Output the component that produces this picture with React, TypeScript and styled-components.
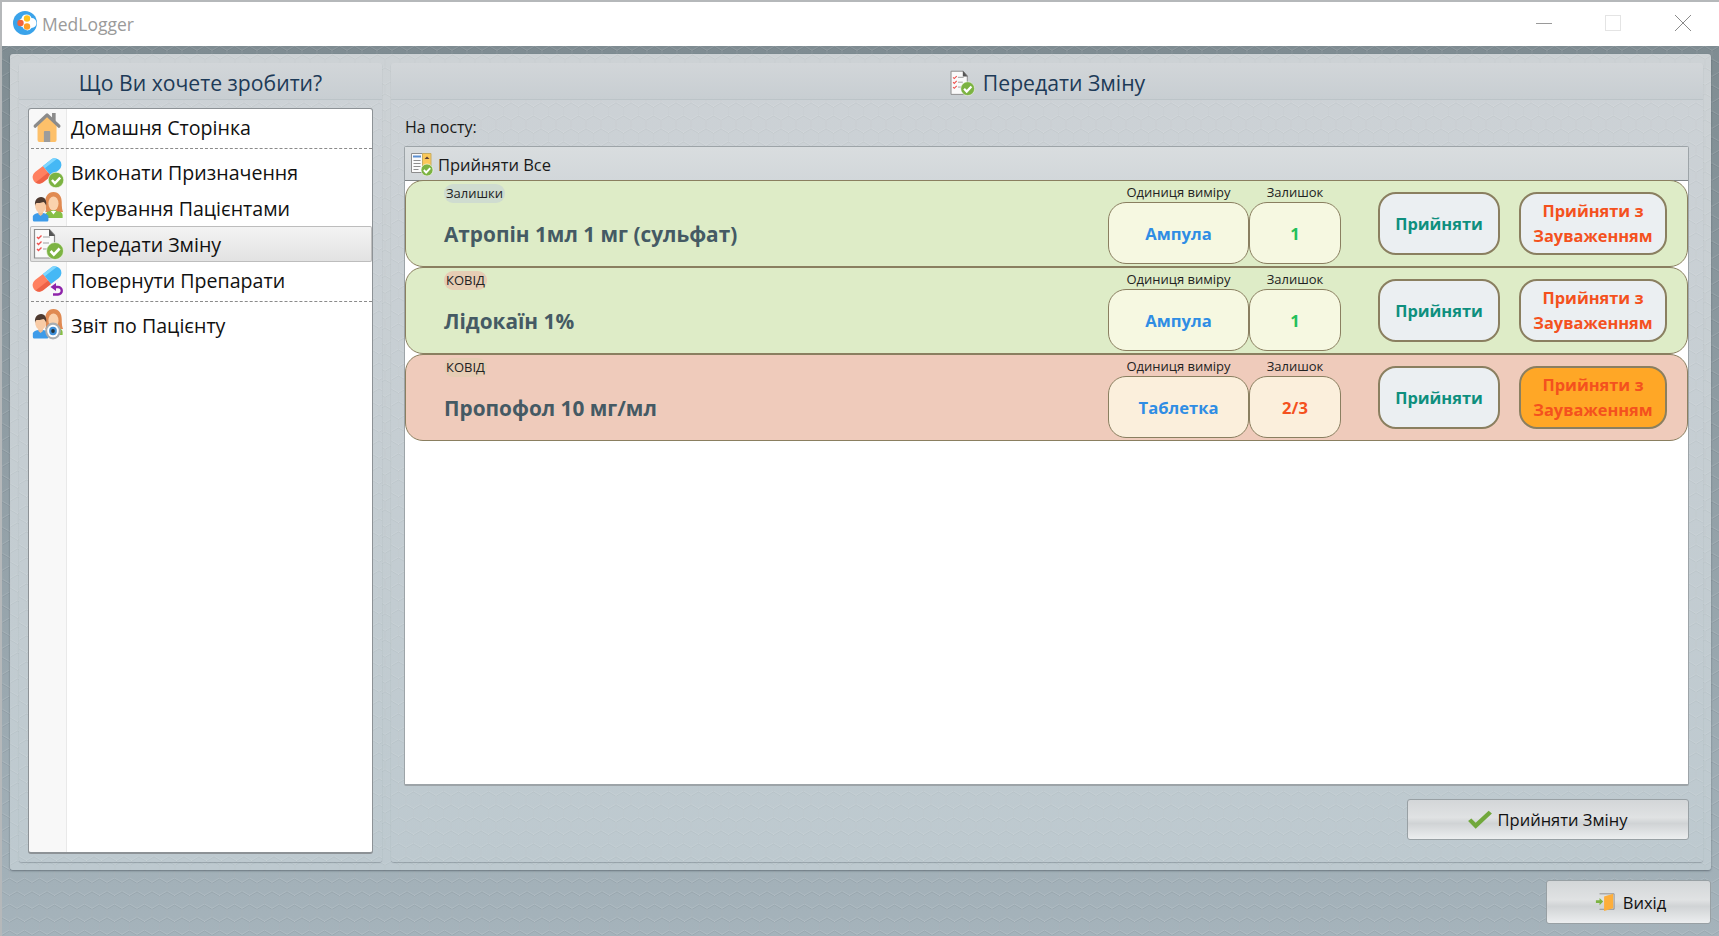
import React from "react";
import styled, { createGlobalStyle } from "styled-components";

const hexTile = (light: string, dark: string) =>
  `url("data:image/svg+xml,${encodeURIComponent(
    `<svg xmlns='http://www.w3.org/2000/svg' width='15' height='26'><g fill='none'><path transform='translate(0 1)' d='M0 4.300 L7.500 0 L15 4.300 V13 L7.500 17.300 L0 13 Z M7.500 17.300 V26' stroke='${dark}'/><path d='M0 4.300 L7.500 0 L15 4.300 V13 L7.500 17.300 L0 13 Z M7.500 17.300 V26' stroke='${light}'/></g></svg>`
  )}")`;

const GlobalStyle = createGlobalStyle`
  html, body {
    margin: 0;
    padding: 0;
    height: 936px;
    overflow: hidden;
    background: #8a979d;
  }
  body, button {
    font-family: "Open Sans", "Noto Sans", sans-serif;
  }
`;

const Window = styled.div`
  width: 1719px;
  height: 936px;
  padding-left: 2px;
  padding-top: 2px;
  box-sizing: border-box;
  display: flex;
  flex-direction: column;
  background: #b5b8ba;
`;

const TitleBar = styled.div`
  height: 44px;
  flex: none;
  background: #fff;
  display: flex;
  align-items: center;
  padding: 0 27px 0 11px;
`;

const LogoWrap = styled.span`
  display: flex;
  margin-top: -3px;
`;

const AppName = styled.span`
  font-size: 17.500px;
  color: #9a9a9a;
  margin-left: 5px;
`;

const WindowControls = styled.div`
  margin-left: auto;
  display: flex;
  gap: 53px;
  align-items: center;
  margin-top: -2px;
`;

const Body = styled.div`
  flex: 1;
  min-height: 0;
  display: flex;
  flex-direction: column;
  padding: 8px 8px 10px 8px;
  background-image: ${hexTile("rgba(255,255,255,0.12)", "rgba(40,55,65,0.09)")},
    linear-gradient(180deg, #7f8c92 0%, #a5b3bb 100%);
`;

const OuterPanel = styled.div`
  height: 816px;
  flex: none;
  display: flex;
  gap: 9px;
  padding: 9px 8px 8px 9px;
  box-sizing: border-box;
  border-radius: 3px;
  background-image: ${hexTile("rgba(255,255,255,0.08)", "rgba(60,75,85,0.05)")},
    linear-gradient(180deg, #cdd2d5 0%, #bdc9cf 100%);
  box-shadow: 0 1px 2px rgba(60, 70, 80, 0.55);
`;

const SidePanel = styled.section<{ $width?: string }>`
  display: flex;
  flex-direction: column;
  flex: ${(p) => (p.$width ? `0 0 ${p.$width}` : "1")};
  min-width: 0;
  border-radius: 3px;
  background-image: ${hexTile("rgba(255,255,255,0.09)", "rgba(60,75,85,0.05)")},
    linear-gradient(180deg, #cdd2d6 0%, #bdc9cf 100%);
  box-shadow: 0 1px 1px rgba(90, 100, 110, 0.4);
`;

const PanelHeader = styled.header`
  height: 37px;
  flex: none;
  box-sizing: border-box;
  padding-top: 3px;
  display: flex;
  align-items: center;
  justify-content: center;
  gap: 8px;
  font-size: 21.200px;
  color: #1d3a57;
  border-bottom: 1px solid #bcc4c8;
  background: linear-gradient(180deg, #d2d6d9 0%, #c8ced2 100%);
  border-radius: 3px 3px 0 0;
`;

const MenuBox = styled.nav`
  flex: 1;
  margin: 8px 9px 8px 9px;
  background: linear-gradient(90deg, #f8f8f8 0, #f8f8f8 37px, #e9e9e9 37px, #e9e9e9 38px, #fff 38px);
  border: 1px solid #8d9296;
  border-bottom-width: 2px;
  border-radius: 3px;
  padding: 0 0 0 1px;
  display: flex;
  flex-direction: column;
`;

const MenuItem = styled.div<{ $active?: boolean }>`
  height: 36px;
  flex: none;
  padding-top: 1px;
  display: flex;
  align-items: center;
  font-size: 19.600px;
  color: #111;
  box-sizing: border-box;
  border-radius: 2px;
  ${(p) =>
    p.$active &&
    `background: linear-gradient(180deg, #f4f4f4 0%, #e2e2e2 100%);
     box-shadow: inset 0 0 0 1px #bdbdbd;`}
`;

const MenuIcon = styled.span`
  width: 37px;
  height: 32px;
  box-sizing: border-box;
  padding-right: 2px;
  margin-top: -2px;
  flex: none;
  display: flex;
  justify-content: center;
  margin-right: 4px;
`;

const MenuDivider = styled.div`
  flex: none;
  margin: 3px 0 5px 1px;
  border-top: 1px dashed #8b8b8b;
`;

const Content = styled.div`
  flex: 1;
  min-height: 0;
  display: flex;
  flex-direction: column;
  padding: 18px 14px 0 13px;
`;

const PostLabel = styled.div`
  font-size: 16px;
  color: #1a1a1a;
  height: 19px;
  line-height: 19px;
  margin: 0 0 9px 1px;
`;

const Grid = styled.div`
  height: 637px;
  flex: none;
  display: flex;
  flex-direction: column;
  border: 1px solid #9da4a8;
  border-bottom-width: 2px;
  border-radius: 2px;
  background: #fff;
`;

const GridToolbar = styled.div`
  height: 32px;
  flex: none;
  box-sizing: content-box;
  display: flex;
  align-items: center;
  padding: 1px 0 0 5px;
  margin-bottom: -1px;
  gap: 4px;
  font-size: 16.500px;
  color: #1a1a1a;
  border-bottom: 1px solid #7f8385;
  background: linear-gradient(180deg, #d9dddf 0%, #d2d7da 100%);
`;

const DrugRow = styled.div<{ $warn?: boolean }>`
  height: 87px;
  flex: none;
  box-sizing: border-box;
  display: flex;
  align-items: stretch;
  padding: 0 20px 0 38px;
  border: 1px solid #8a7f60;
  border-radius: 18px;
  background: ${(p) => (p.$warn ? "#efcbbb" : "#deecc7")};
`;

const DrugInfo = styled.div`
  flex: 1;
  min-width: 0;
`;

const Tag = styled.span<{ $kind: "stock" | "covid" }>`
  display: inline-block;
  height: 19px;
  line-height: 19px;
  font-size: 13px;
  padding: 0 2px;
  border-radius: 9px;
  color: #222;
  background: ${(p) => (p.$kind === "stock" ? "#cfdcd0" : "#e6cdb4")};
`;

const DrugName = styled.div`
  font-size: 20.800px;
  font-weight: 700;
  color: #455a64;
  line-height: 28px;
  margin-top: 17px;
`;

const ValueColumn = styled.div<{ $width: number }>`
  width: ${(p) => p.$width}px;
  flex: none;
  display: flex;
  flex-direction: column;
  align-items: center;
`;

const ValueCaption = styled.div`
  font-size: 13px;
  line-height: 16px;
  height: 16px;
  margin-top: 3px;
  color: #222;
`;

const ValueBox = styled.div<{ $warn?: boolean; $color: string }>`
  width: 100%;
  height: 62px;
  margin-top: 2px;
  box-sizing: border-box;
  display: flex;
  align-items: center;
  justify-content: center;
  border: 1px solid #8a7f60;
  border-radius: 18px;
  font-size: 16.600px;
  font-weight: 700;
  color: ${(p) => p.$color};
  background: ${(p) => (p.$warn ? "#fbefdc" : "#f6f8e1")};
`;

const ActionButton = styled.button<{ $width: number; $gap: number; $tone: string; $bg?: string }>`
  width: ${(p) => p.$width}px;
  height: 63px;
  align-self: center;
  margin: -1px 0 0 ${(p) => p.$gap}px;
  flex: none;
  padding: 0;
  box-sizing: border-box;
  border: 2px solid #8a7f60;
  border-radius: 18px;
  background: ${(p) => p.$bg || "#ebeff2"};
  color: ${(p) => p.$tone};
  font-size: 16.400px;
  font-weight: 700;
  line-height: 25px;
`;

const Footer = styled.div`
  display: flex;
  justify-content: flex-end;
  padding-top: 13px;
`;

const ChromeButton = styled.button<{ $width: number; $height: number; $gap: number; $offset: number }>`
  width: ${(p) => p.$width}px;
  height: ${(p) => p.$height}px;
  box-sizing: border-box;
  display: flex;
  align-items: center;
  justify-content: center;
  gap: ${(p) => p.$gap}px;
  padding: 0 ${(p) => (p.$offset < 0 ? -p.$offset : 0)}px 0 ${(p) => (p.$offset > 0 ? p.$offset : 0)}px;
  border: 1px solid #98a0a4;
  border-radius: 3px;
  font-size: 16.500px;
  color: #111;
  background: linear-gradient(180deg, #d3d6d8 0%, #e0e2e3 45%, #d0d3d5 60%, #eceeef 100%);
`;

const BottomBar = styled.div`
  display: flex;
  justify-content: flex-end;
  padding: 10px 0 0 0;
`;

const HomeIcon = () => (
  <svg width="29" height="32" viewBox="0 0 32 32" preserveAspectRatio="none">
    <path d="M21 2h4v9h-4z" fill="#8b8b8b" />
    <path d="M5 12 15.500 4 26 12v17a2 2 0 0 1-2 2H7a2 2 0 0 1-2-2z" fill="#fdc06a" />
    <path d="M12 21a1 1 0 0 1 1-1h5a1 1 0 0 1 1 1v10h-7z" fill="#9c9c9c" />
    <path d="M2.500 15 15.500 4 28.500 15" fill="none" stroke="#8b8b8b" strokeWidth="3.600" strokeLinejoin="round" strokeLinecap="round" />
  </svg>
);

const PillShape = () => (
  <g transform="rotate(-38 15 15)">
    <path d="M15 8.500H5a6.500 6.500 0 0 0 0 13h10z" fill="#ff8060" />
    <path d="M15 17H-1a6.500 6.500 0 0 0 6 4.500h10z" fill="#ee6247" />
    <path d="M15 8.500h10a6.500 6.500 0 0 1 0 13H15z" fill="#45b8f5" />
    <path d="M15 8.500h10a6.500 6.500 0 0 1 5.500 3H15z" fill="#7ed6ff" />
  </g>
);

const CheckBadge = ({ cx, cy, r }: { cx: number; cy: number; r: number }) => (
  <g>
    <circle cx={cx} cy={cy} r={r} fill="#7cb342" stroke="#fff" strokeWidth="0.600" />
    <path
      d={`M${cx - r * 0.52} ${cy} l${r * 0.38} ${r * 0.42} l${r * 0.68} ${-r * 0.72}`}
      fill="none"
      stroke="#fff"
      strokeWidth={r * 0.32}
    />
  </g>
);

const PillCheckIcon = () => (
  <svg width="32" height="32" viewBox="0 0 32 32">
    <PillShape />
    <CheckBadge cx={24} cy={24} r={7.800} />
  </svg>
);

const PillReturnIcon = () => (
  <svg width="32" height="32" viewBox="0 0 32 32">
    <PillShape />
    <path d="M22 23h4a3.500 3.500 0 0 1 0 7.500h-5" fill="none" stroke="#8e24aa" strokeWidth="2.400" />
    <path d="M18.500 23l5.500-4v8z" fill="#8e24aa" />
  </svg>
);

const PeopleShapes = () => (
  <g>
    <path d="M24.500 0c6 0 9 4.500 9 10 0 5 .5 8 1.500 10H15.500c1.500-2 0-5 0-10 0-5.500 3-10 9-10z" fill="#e08a52" />
    <path d="M18 19.500c2 0 3-.5 4-1.500h5c1 1 2 1.500 4 1.500 2.500.5 3.500 2 3.500 4V26H15v-3z" fill="#86bf45" />
    <path d="M21.500 19l3 3.500 3-3.500z" fill="#fff" />
    <ellipse cx="24.500" cy="11.500" rx="5.500" ry="7" fill="#fad2ae" />
    <path d="M2 24c1.500-2.500 5-3 8.500-3s7 .5 8.500 3v4a1.500 1.500 0 0 1-1.500 1.500h-14A1.500 1.500 0 0 1 2 28z" fill="#3d9be9" />
    <path d="M8 18h5v4l-2.500 2L8 22z" fill="#efbd94" />
    <ellipse cx="10.500" cy="13.500" rx="6" ry="7.500" fill="#f8cba6" />
    <path d="M4.500 14c-1-5.500 2-9 6.500-9s6.500 4 5.500 9c-.5-2-1.500-3.500-3-4-2.500 1-5.500 1-7.500 1-1 .5-1.500 2-1.500 3z" fill="#4e3a30" />
  </g>
);

const PeopleIcon = () => (
  <svg width="33" height="32" viewBox="0 0 36 32" preserveAspectRatio="none">
    <PeopleShapes />
  </svg>
);

const PeopleEyeIcon = () => (
  <svg width="33" height="32" viewBox="0 0 36 32" preserveAspectRatio="none">
    <PeopleShapes />
    <circle cx="24" cy="22" r="8.500" fill="#a9adb1" />
    <circle cx="24" cy="22" r="6.300" fill="#fff" />
    <circle cx="24" cy="22" r="4.200" fill="#3f8fd8" />
    <circle cx="24" cy="22" r="2" fill="#263238" />
  </svg>
);

const ChecklistShapes = () => (
  <g>
    <path d="M2.500 1.500h15l5 5.500v23h-20z" fill="#fafafa" stroke="#8d8d8d" strokeWidth="1.200" />
    <path d="M17 1l6 7h-6z" fill="#555" />
    <path d="M5 9l1.500 1.500L9.500 7.500M5 15l1.500 1.500L9.500 13.500M5 21l1.500 1.500L9.500 19.500" fill="none" stroke="#ef5350" strokeWidth="1.400" />
    <path d="M11 9h7M11 15h6M11 21h4" stroke="#9e9e9e" strokeWidth="1.200" />
    <CheckBadge cx={23} cy={23} r={8.500} />
  </g>
);

const ChecklistIcon = () => (
  <svg width="32" height="32" viewBox="0 0 32 32">
    <ChecklistShapes />
  </svg>
);

const ShiftIcon = () => (
  <svg width="26" height="26" viewBox="0 0 32 32">
    <ChecklistShapes />
  </svg>
);

const AcceptAllIcon = () => (
  <svg width="24" height="24" viewBox="0 0 24 24">
    <path d="M1.500 1.500h11v19h-11z" fill="#fafafa" stroke="#8d8d8d" />
    <path d="M3 3.500h8v2H3z" fill="#5b8fd0" />
    <path d="M3.500 8.500h7M3.500 11.500h7M3.500 14.500h7M3.500 17.500h5" stroke="#8d8d8d" />
    <path d="M12.500 1.500h8.500v13h-8.500z" fill="#fbc85a" stroke="#c7ad62" />
    <path d="M14.500 7l2.500-2.500L19.500 7z" fill="#5d4037" />
    <CheckBadge cx={17} cy={18} r={6} />
  </svg>
);

const AppLogo = () => (
  <svg width="24" height="24" viewBox="0 0 24 24">
    <circle cx="12" cy="12" r="12" fill="#3aa3ea" />
    <path d="M13.500 3.500a5 5 0 0 1 5 3.500 5 5 0 0 1 0 10 5 5 0 0 1-9-1 4.500 4.500 0 0 1-1-8.500 5 5 0 0 1 5-4z" fill="#fff" />
    <circle cx="7.500" cy="12" r="3.200" fill="#f4633a" />
    <circle cx="14" cy="7.500" r="3.200" fill="#ffc21e" />
    <circle cx="14" cy="15.500" r="3.200" fill="#ff9f26" />
  </svg>
);

const BigCheck = () => (
  <svg width="26" height="20" viewBox="0 0 24 18">
    <path d="M1 10l7 7L23 3l-3-2.500L8 11.500 4 7.500z" fill="#71a83c" />
  </svg>
);

const ExitIcon = () => (
  <svg width="20" height="20" viewBox="0 0 22 22">
    <path d="M5 2h16v17H5" fill="none" stroke="#8a8a8a" />
    <path d="M10 5l10-3v16l-10 3z" fill="#fdae3b" />
    <path d="M1 9h4V6.500L9 10.500 5 14.500V12H1z" fill="#7cb342" />
  </svg>
);

const rows = [
  { tag: "Залишки", kind: "stock" as const, name: "Атропін 1мл 1 мг (сульфат)", unit: "Ампула", left: "1", warn: false },
  { tag: "КОВІД", kind: "covid" as const, name: "Лідокаїн 1%", unit: "Ампула", left: "1", warn: false },
  { tag: "КОВІД", kind: "covid" as const, name: "Пропофол 10 мг/мл", unit: "Таблетка", left: "2/3", warn: true },
];

const App = () => (
  <>
    <GlobalStyle />
    <Window>
      <TitleBar>
        <LogoWrap><AppLogo /></LogoWrap>
        <AppName>MedLogger</AppName>
        <WindowControls>
          <svg width="16" height="16" viewBox="0 0 16 16">
            <path d="M0 8.500h16" stroke="#9a9a9a" />
          </svg>
          <svg width="16" height="16" viewBox="0 0 16 16">
            <rect x="0.500" y="0.500" width="15" height="15" fill="none" stroke="#e4e4e4" />
          </svg>
          <svg width="18" height="18" viewBox="0 0 18 18">
            <path d="M1 1l16 16M17 1 1 17" stroke="#8a8a8a" />
          </svg>
        </WindowControls>
      </TitleBar>
      <Body>
        <OuterPanel>
          <SidePanel $width="363px">
            <PanelHeader>Що Ви хочете зробити?</PanelHeader>
            <MenuBox>
              <MenuItem>
                <MenuIcon><HomeIcon /></MenuIcon>Домашня Сторінка
              </MenuItem>
              <MenuDivider />
              <MenuItem>
                <MenuIcon><PillCheckIcon /></MenuIcon>Виконати Призначення
              </MenuItem>
              <MenuItem>
                <MenuIcon><PeopleIcon /></MenuIcon>Керування Пацієнтами
              </MenuItem>
              <MenuItem $active>
                <MenuIcon><ChecklistIcon /></MenuIcon>Передати Зміну
              </MenuItem>
              <MenuItem>
                <MenuIcon><PillReturnIcon /></MenuIcon>Повернути Препарати
              </MenuItem>
              <MenuDivider />
              <MenuItem>
                <MenuIcon><PeopleEyeIcon /></MenuIcon>Звіт по Пацієнту
              </MenuItem>
            </MenuBox>
          </SidePanel>
          <SidePanel>
            <PanelHeader>
              <ShiftIcon />
              Передати Зміну
            </PanelHeader>
            <Content>
              <PostLabel>На посту:</PostLabel>
              <Grid>
                <GridToolbar>
                  <AcceptAllIcon />
                  Прийняти Все
                </GridToolbar>
                {rows.map((r) => (
                  <DrugRow key={r.name} $warn={r.warn}>
                    <DrugInfo>
                      <Tag $kind={r.kind}>{r.tag}</Tag>
                      <DrugName>{r.name}</DrugName>
                    </DrugInfo>
                    <ValueColumn $width={141}>
                      <ValueCaption>Одиниця виміру</ValueCaption>
                      <ValueBox $warn={r.warn} $color="#2f8de4">{r.unit}</ValueBox>
                    </ValueColumn>
                    <ValueColumn $width={92}>
                      <ValueCaption>Залишок</ValueCaption>
                      <ValueBox $warn={r.warn} $color={r.warn ? "#f4511e" : "#22c05a"}>{r.left}</ValueBox>
                    </ValueColumn>
                    <ActionButton $width={122} $gap={37} $tone="#0e8f7e">Прийняти</ActionButton>
                    <ActionButton $width={148} $gap={19} $tone="#f4511e" $bg={r.warn ? "#ffa726" : undefined}>
                      Прийняти з<br />Зауваженням
                    </ActionButton>
                  </DrugRow>
                ))}
              </Grid>
              <Footer>
                <ChromeButton $width={282} $height={41} $gap={5} $offset={-2}>
                  <BigCheck />
                  Прийняти Зміну
                </ChromeButton>
              </Footer>
            </Content>
          </SidePanel>
        </OuterPanel>
        <BottomBar>
          <ChromeButton $width={165} $height={44} $gap={8} $offset={4}>
            <ExitIcon />
            Вихід
          </ChromeButton>
        </BottomBar>
      </Body>
    </Window>
  </>
);

export default App;
